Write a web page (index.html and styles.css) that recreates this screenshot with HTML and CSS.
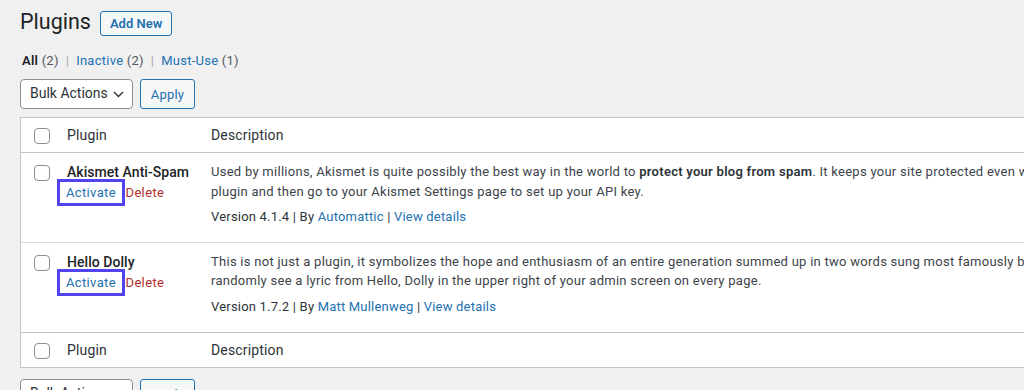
FILE: index.html
```html
<!DOCTYPE html>
<html lang="en">
<head>
<meta charset="utf-8">
<title>Plugins</title>
<link rel="stylesheet" href="styles.css">
</head>
<body>
<div class="wrap">
  <div class="page-head">
    <h1 class="page-title">Plugins</h1>
    <a class="btn-add" href="#">Add New</a>
  </div>

  <ul class="subsubsub">
    <li><a class="current" href="#">All <span class="count">(2)</span></a><span class="sep">|</span></li>
    <li><a href="#">Inactive <span class="count">(2)</span></a><span class="sep">|</span></li>
    <li><a href="#">Must-Use <span class="count">(1)</span></a></li>
  </ul>

  <div class="tablenav">
    <div class="bulk-select">
      <span>Bulk Actions</span>
      <svg class="chev" width="11" height="7" viewBox="0 0 11 7"><path d="M1 1l4.5 4.5L10 1" fill="none" stroke="#2c3338" stroke-width="1.4"/></svg>
    </div>
    <button class="btn-apply" type="button">Apply</button>
  </div>

  <table class="plugins">
    <thead>
      <tr>
        <th class="check-col"><span class="cb"></span></th>
        <th class="name-col">Plugin</th>
        <th class="desc-col">Description</th>
      </tr>
    </thead>
    <tbody>
      <tr>
        <td class="check-col row-check"><span class="cb"></span></td>
        <td class="name-col">
          <strong class="plugin-title">Akismet Anti-Spam</strong>
          <div class="row-actions"><a class="activate" href="#">Activate</a> <a class="delete" href="#">Delete</a></div>
        </td>
        <td class="desc-col">
          <p class="desc">Used by millions, Akismet is quite possibly the best way in the world to <strong>protect your blog from spam</strong>. It keeps your site protected even while you sleep. To get started: activate the Akismet<br>plugin and then go to your Akismet Settings page to set up your API key.</p>
          <div class="version">Version 4.1.4 | By <a href="#">Automattic</a> | <a href="#">View details</a></div>
        </td>
      </tr>
      <tr>
        <td class="check-col row-check"><span class="cb"></span></td>
        <td class="name-col">
          <strong class="plugin-title">Hello Dolly</strong>
          <div class="row-actions"><a class="activate" href="#">Activate</a> <a class="delete" href="#">Delete</a></div>
        </td>
        <td class="desc-col">
          <p class="desc">This is not just a plugin, it symbolizes the hope and enthusiasm of an entire generation summed up in two words sung most famously by Louis Armstrong: Hello, Dolly. When activated you will<br>randomly see a lyric from Hello, Dolly in the upper right of your admin screen on every page.</p>
          <div class="version">Version 1.7.2 | By <a href="#">Matt Mullenweg</a> | <a href="#">View details</a></div>
        </td>
      </tr>
    </tbody>
    <tfoot>
      <tr>
        <th class="check-col"><span class="cb"></span></th>
        <th class="name-col">Plugin</th>
        <th class="desc-col">Description</th>
      </tr>
    </tfoot>
  </table>

  <div class="tablenav tablenav-bottom">
    <div class="bulk-select">
      <span>Bulk Actions</span>
      <svg class="chev" width="11" height="7" viewBox="0 0 11 7"><path d="M1 1l4.5 4.5L10 1" fill="none" stroke="#2c3338" stroke-width="1.4"/></svg>
    </div>
    <button class="btn-apply" type="button">Apply</button>
  </div>
</div>
</body>
</html>
```

FILE: styles.css
```css
html, body {
  margin: 0;
  padding: 0;
  overflow: hidden;
}
body {
  background: #f0f0f1;
  color: #3c434a;
  font-family: Roboto, "Liberation Sans", sans-serif;
  font-size: 13px;
  line-height: 1.4;
}
a {
  color: #2271b1;
  text-decoration: none;
}
.wrap {
  width: 1500px;
  padding: 7px 0 0 20px;
}
.page-head {
  display: flex;
  align-items: center;
  gap: 9px;
  height: 30px;
}
.page-title {
  margin: 0;
  font-size: 21.5px;
  font-weight: 400;
  line-height: 30px;
  color: #1d2327;
}
.btn-add {
  display: inline-block;
  border: 1px solid #2271b1;
  border-radius: 3px;
  background: #f6f7f7;
  color: #2271b1;
  font-size: 13px;
  font-weight: 600;
  line-height: 23px;
  padding: 0 9px;
  margin-top: 3px;
}
.subsubsub {
  list-style: none;
  margin: 14px 0 0 2px;
  padding: 0;
  display: flex;
  line-height: 20px;
  font-size: 13px;
  letter-spacing: 0.25px;
  color: #646970;
}
.subsubsub a {
  color: #2271b1;
}
.subsubsub a.current {
  color: #1d2327;
  font-weight: 600;
}
.subsubsub .count {
  color: #50575e;
  font-weight: 400;
}
.subsubsub .sep {
  color: #a7aaad;
  margin: 0 7px;
}
.tablenav {
  display: flex;
  gap: 7px;
  margin-top: 8px;
  height: 30px;
}
.bulk-select {
  box-sizing: border-box;
  width: 113px;
  height: 30px;
  border: 1px solid #8c8f94;
  border-radius: 4px;
  background: #fff;
  color: #2c3338;
  font-size: 14px;
  display: flex;
  align-items: center;
  justify-content: space-between;
  padding: 0 8px 0 9px;
}
.chev {
  display: block;
}
.btn-apply {
  box-sizing: border-box;
  height: 30px;
  width: 55px;
  border: 1px solid #2271b1;
  border-radius: 3px;
  background: #f6f7f7;
  color: #2271b1;
  font-family: inherit;
  font-size: 13px;
  letter-spacing: 0.2px;
  padding: 0;
}
.plugins {
  margin-top: 8px;
  border: 1px solid #c3c4c7;
  border-spacing: 0;
  background: #fff;
  width: 1400px;
  table-layout: fixed;
}
.plugins th,
.plugins td {
  text-align: left;
  vertical-align: top;
}
.plugins th {
  font-weight: 400;
  font-size: 14px;
  letter-spacing: 0.15px;
  color: #2c3338;
  line-height: 20px;
  padding: 7px 10px;
}
.plugins thead th {
  border-bottom: 1px solid #c3c4c7;
}
.plugins tfoot th {
  border-top: 1px solid #c3c4c7;
}
.plugins tbody tr + tr td {
  border-top: 1px solid #dcdcde;
}
.plugins .check-col {
  width: 36px;
  box-sizing: border-box;
  padding: 10px 0 0 13px;
}
.plugins .row-check {
  padding-top: 12px;
}
.plugins .name-col {
  width: 144px;
  box-sizing: border-box;
}
.cb {
  display: block;
  box-sizing: border-box;
  width: 16px;
  height: 16px;
  border: 1px solid #8c8f94;
  border-radius: 4px;
  background: #fff;
}
.plugins td {
  padding: 9px 10px 15px;
}
.plugins tbody tr + tr td {
  padding-bottom: 16px;
}
.plugin-title {
  display: block;
  white-space: nowrap;
  font-size: 14px;
  font-weight: 500;
  letter-spacing: 0.05px;
  line-height: 20px;
  color: #1d2327;
}
.row-actions {
  white-space: nowrap;
  line-height: 20px;
  font-size: 13px;
  letter-spacing: 0.35px;
}
.row-actions .activate {
  display: inline-block;
  padding: 1px 6px 0;
  margin-left: -7px;
  outline: 3px solid #5143ee;
}
.row-actions .delete {
  color: #b32d2e;
}
.desc {
  margin: 0;
  white-space: nowrap;
  line-height: 19.5px;
  letter-spacing: 0.27px;
  color: #3c434a;
}
.desc strong {
  font-weight: 600;
  color: #2c3338;
}
.version {
  margin-top: 6px;
  line-height: 19.5px;
  letter-spacing: 0.2px;
  color: #2c3338;
}
.tablenav-bottom {
  margin-top: 11px;
}
```
